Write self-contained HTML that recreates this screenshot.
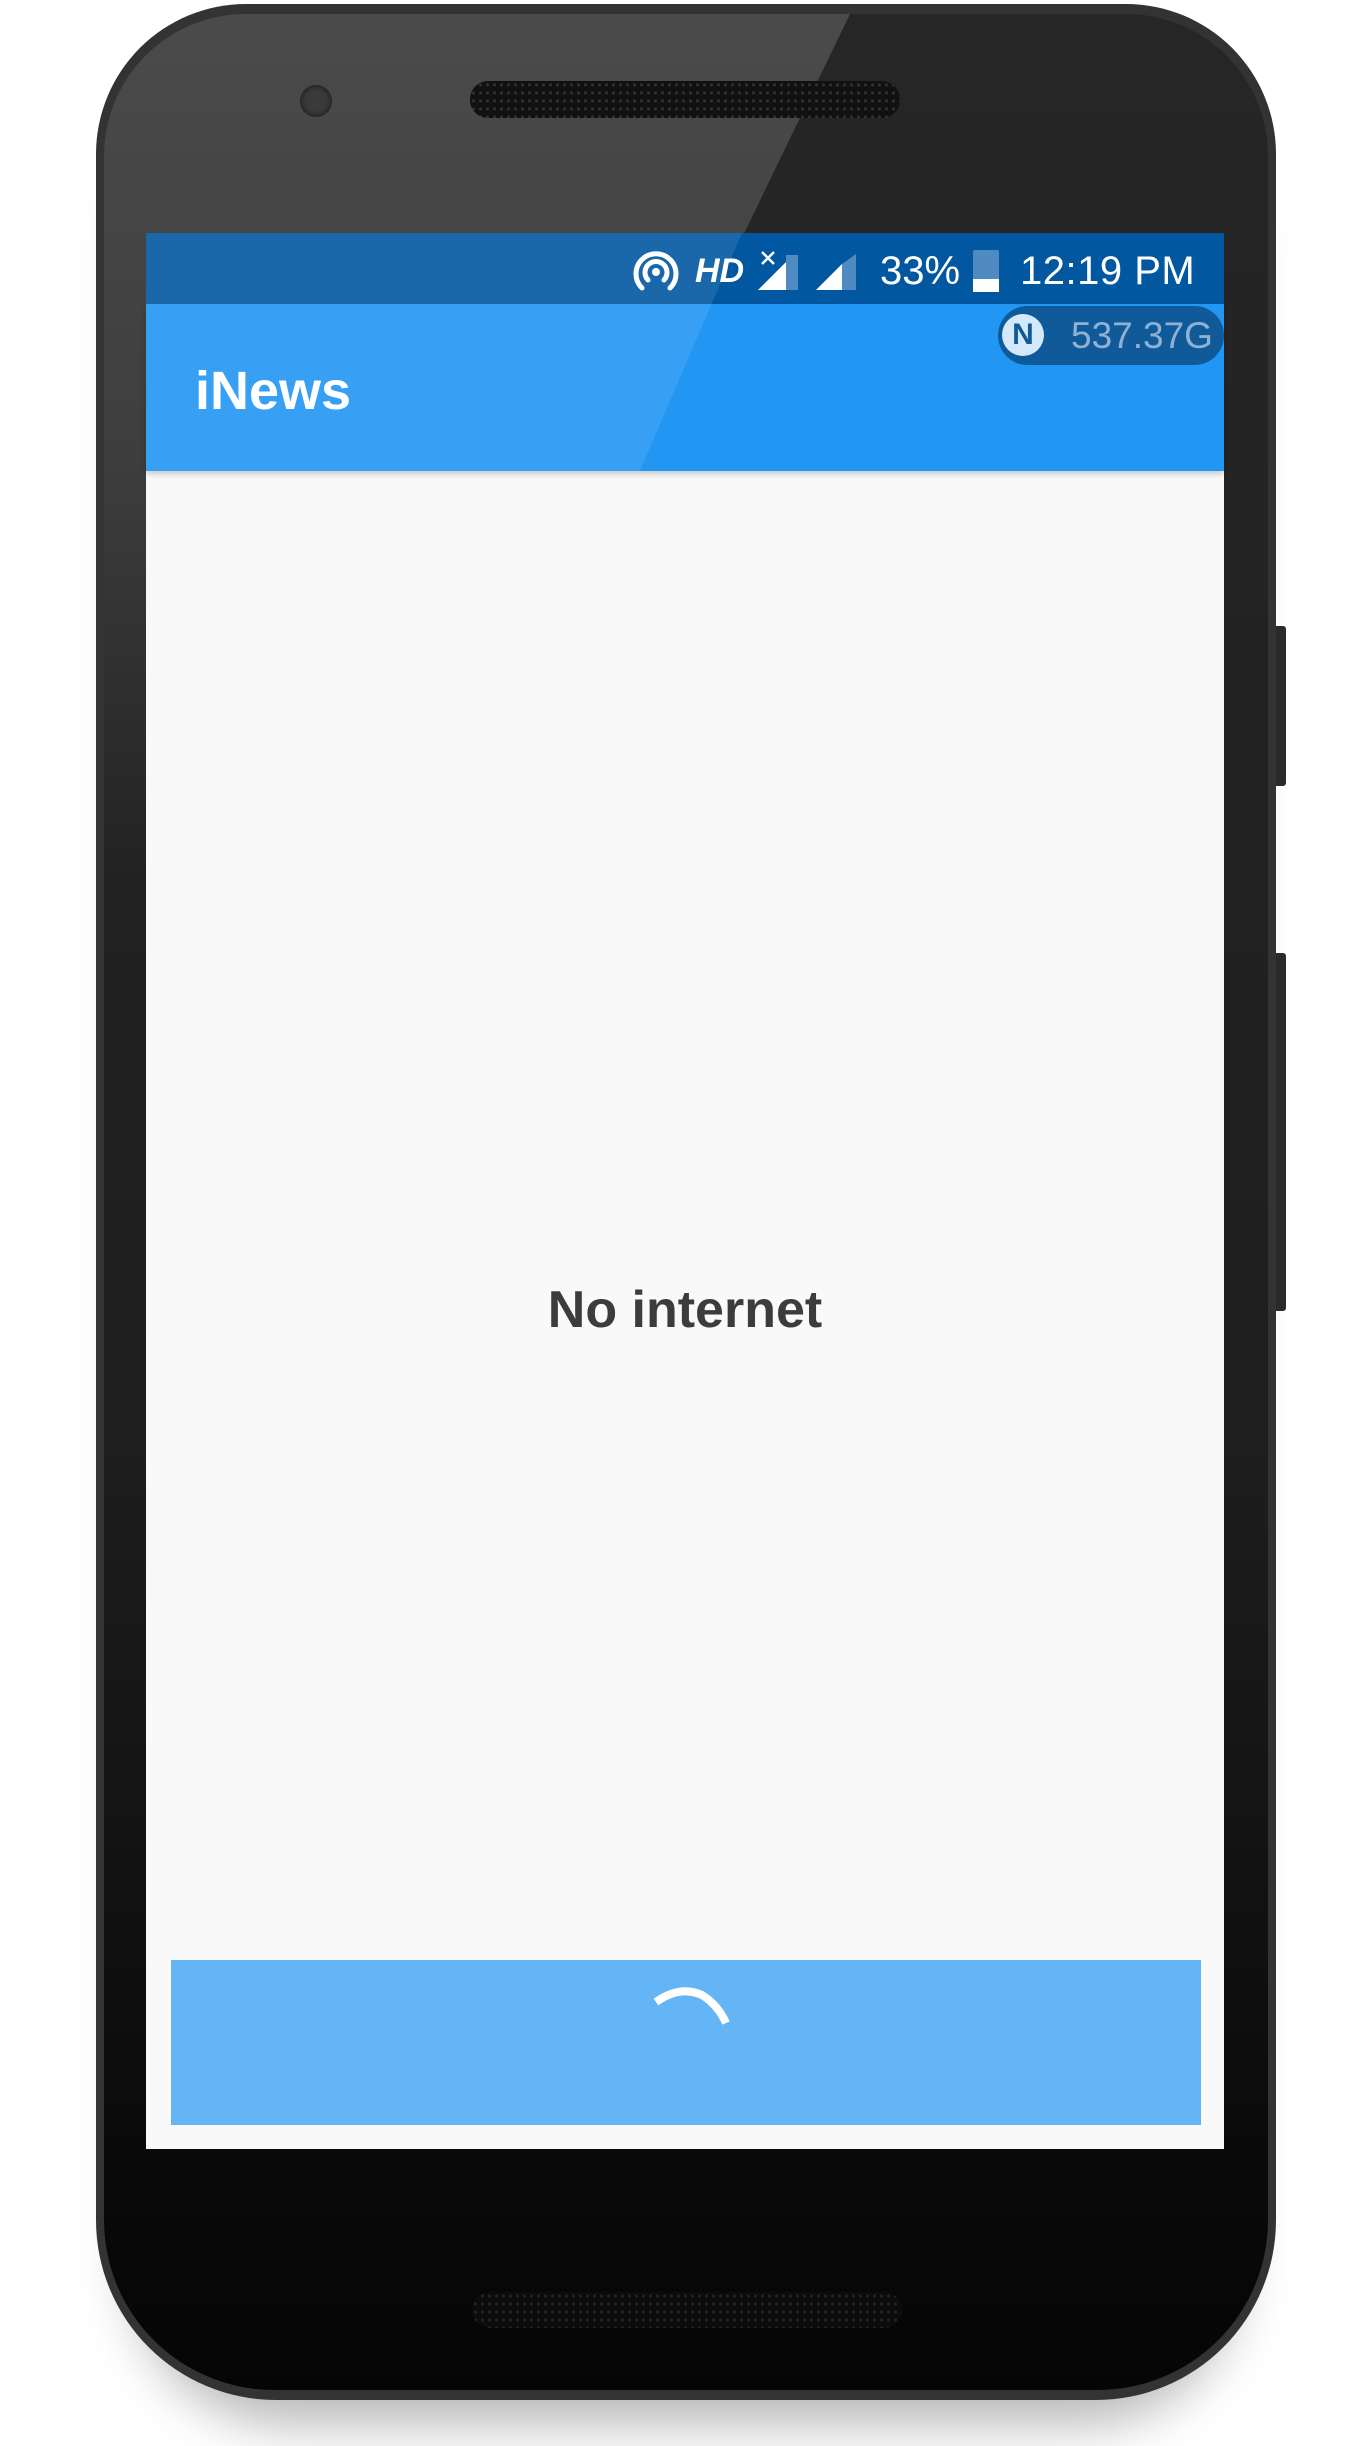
<!DOCTYPE html>
<html><head><meta charset="utf-8"><style>
*{margin:0;padding:0;box-sizing:border-box}
body{width:1370px;height:2446px;background:#fff;position:relative;overflow:hidden;font-family:"Liberation Sans",sans-serif}
.abs{position:absolute}
</style></head><body>
<div class="abs" style="left:130px;top:80px;width:1110px;height:2320px;border-radius:160px;box-shadow:0 25px 50px rgba(0,0,0,.28)"></div>
<div class="abs" style="left:1270px;top:626px;width:16px;height:160px;background:#2a2a2a;border-radius:3px"></div>
<div class="abs" style="left:1270px;top:953px;width:16px;height:358px;background:#2a2a2a;border-radius:3px"></div>
<div class="abs" style="left:96px;top:4px;width:1180px;height:2396px;border-radius:150px 150px 180px 180px;background:#333"></div>
<div class="abs" style="left:104px;top:14px;width:1164px;height:2376px;border-radius:142px 142px 170px 170px;background:linear-gradient(#262626,#1e1e1e 60%,#0a0a0a 90%,#050505)"></div>
<svg class="abs" style="left:0;top:0" width="1370" height="2446"><defs><linearGradient id="g" x1="0" y1="0" x2="0" y2="1"><stop offset="0" stop-color="#fff" stop-opacity="0.17"/><stop offset="0.5" stop-color="#fff" stop-opacity="0.12"/><stop offset="1" stop-color="#fff" stop-opacity="0"/></linearGradient><clipPath id="c"><rect x="104" y="14" width="1164" height="1200" rx="142"/></clipPath></defs><polygon clip-path="url(#c)" points="104,14 850,14 630,470 104,900" fill="url(#g)"/></svg>
<div class="abs" style="left:470px;top:81px;width:430px;height:37px;border-radius:18px;background:#111;background-image:radial-gradient(#333 1.2px,transparent 1.6px);background-size:7px 8px"></div>
<div class="abs" style="left:300px;top:85px;width:32px;height:32px;border-radius:50%;background:#3a3a3a;box-shadow:inset 0 0 6px #111"></div>
<div class="abs" style="left:472px;top:2292px;width:430px;height:36px;border-radius:18px;background:#0c0c0c;background-image:radial-gradient(#262626 1.2px,transparent 1.6px);background-size:7px 8px"></div>
<div class="abs" style="left:146px;top:233px;width:1078px;height:1916px;background:#f9f9f9"></div>
<div class="abs" style="left:146px;top:233px;width:1078px;height:71px;background:#0157a0"></div>
<div class="abs" style="left:146px;top:304px;width:1078px;height:167px;background:#2196f3;box-shadow:0 3px 6px rgba(0,0,0,.2)"></div>
<svg class="abs" style="left:0;top:0" width="1370" height="480"><polygon points="146,233 742,233 640,471 146,471" fill="rgba(255,255,255,0.1)"/></svg>
<svg class="abs" style="left:630px;top:248px" width="52" height="44" viewBox="0 0 52 44"><g fill="none" stroke="#fff" stroke-width="5" stroke-linecap="round"><path d="M12 40 A20 20 0 1 1 40 40"/><path d="M18 32 A11 11 0 1 1 34 32"/></g><circle cx="26" cy="24" r="4" fill="#fff"/></svg>
<div class="abs" style="left:695px;top:252px;color:#fff;font:italic bold 34px 'Liberation Sans',sans-serif">HD</div>
<svg class="abs" style="left:758px;top:250px" width="100" height="42"><polygon points="0,40 28,12 28,40" fill="#fff"/><rect x="28" y="5" width="12" height="35" fill="#4f8ac0"/><path d="M4 2 L16 14 M16 2 L4 14" stroke="#fff" stroke-width="2.5"/><polygon points="58,40 84,14 84,40" fill="#fff"/><polygon points="84,14 98,4 98,40 84,40" fill="#4f8ac0"/></svg>
<div class="abs" style="left:880px;top:249px;color:#fff;font-size:40px">33%</div>
<div class="abs" style="left:973px;top:250px;width:26px;height:42px;background:#4f8ac0;border-radius:2px"><div style="position:absolute;left:0;bottom:0;width:26px;height:13px;background:#fff"></div></div>
<div class="abs" style="left:1020px;top:249px;color:#fff;font-size:40px;letter-spacing:0.5px">12:19 PM</div>
<div class="abs" style="left:998px;top:306px;width:226px;height:59px;border-radius:30px;background:#115a99"></div>
<div class="abs" style="left:1002px;top:314px;width:42px;height:42px;border-radius:50%;background:#d4e8fb;color:#115a99;font:bold 30px 'Liberation Sans',sans-serif;text-align:center;line-height:42px">N</div>
<div class="abs" style="left:1071px;top:315px;color:#8fb2d4;font-size:37px">537.37G</div>
<div class="abs" style="left:195px;top:360px;color:#fff;font:bold 54px 'Liberation Sans',sans-serif">iNews</div>
<div class="abs" style="left:146px;top:1280px;width:1078px;text-align:center;color:#3c3c3c;font:bold 52px 'Liberation Sans',sans-serif">No internet</div>
<div class="abs" style="left:171px;top:1960px;width:1030px;height:165px;background:#64b5f6"></div>
<svg class="abs" style="left:640px;top:1975px" width="120" height="80"><path d="M16 27 Q40 10 62 20 Q78 30 86 48" fill="none" stroke="#fff" stroke-width="8"/></svg>
</body></html>
